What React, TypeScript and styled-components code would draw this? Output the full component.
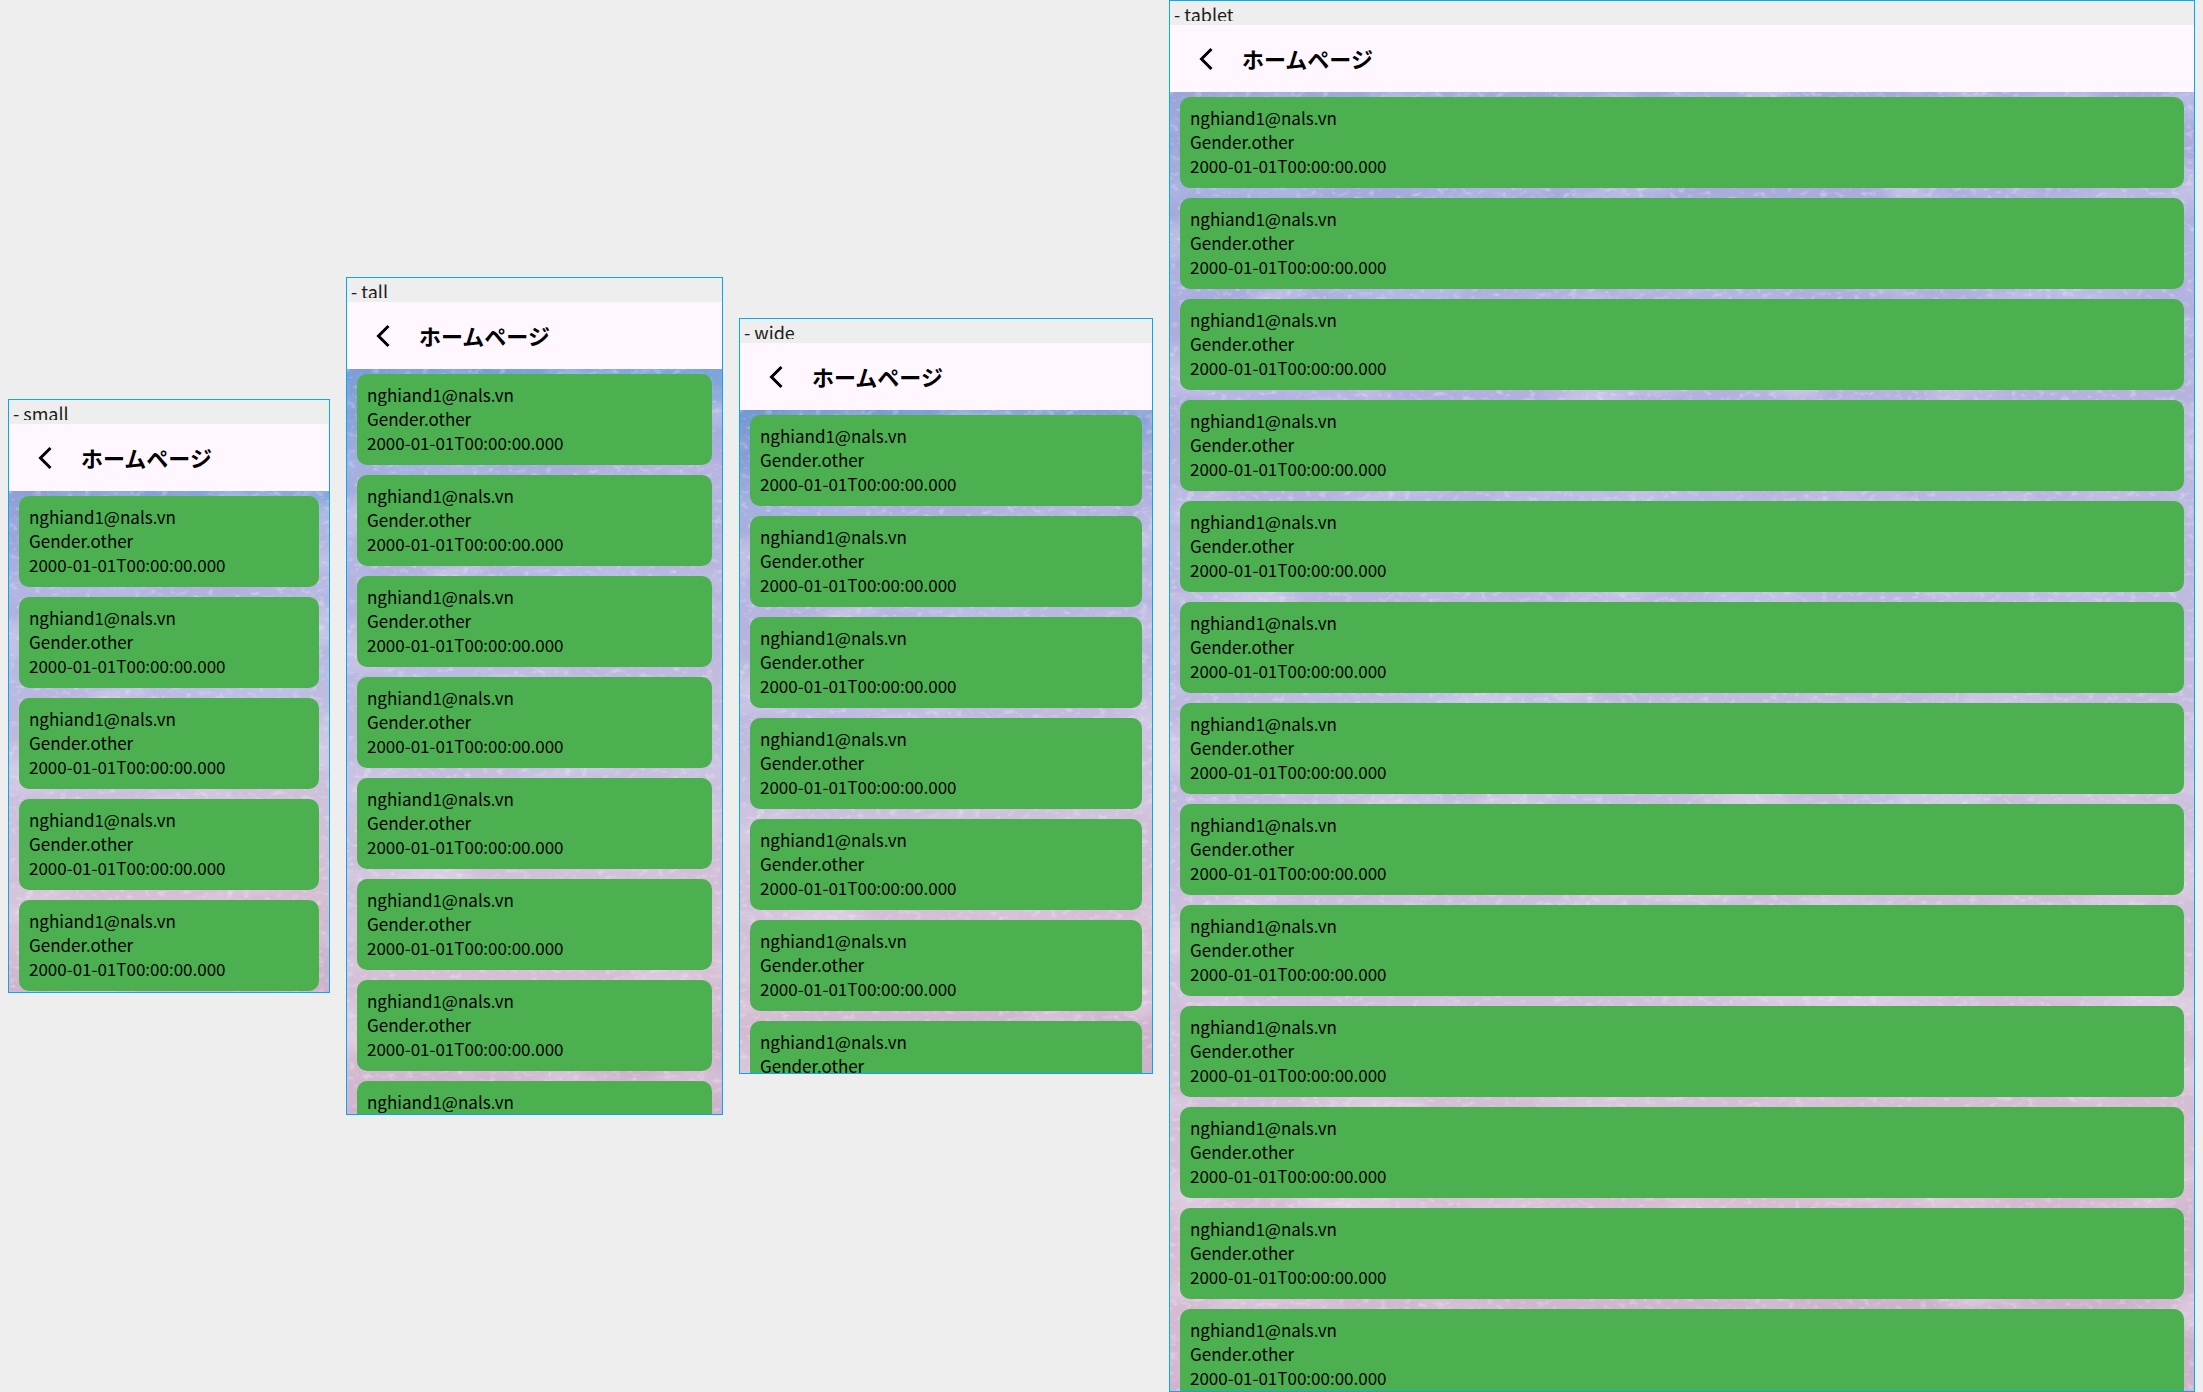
import React from "react";
import styled, { createGlobalStyle } from "styled-components";

const GlobalStyle = createGlobalStyle`
  * { box-sizing: border-box; }
  body {
    margin: 0;
    background: #eeeeee;
    font-family: "Noto Sans CJK JP", "Noto Sans", sans-serif;
  }
`;

const Board = styled.main`
  display: flex;
  align-items: center;
  gap: 16px;
  min-height: 100vh;
  padding: 0 8px;
`;

const Device = styled.section<{ $width: number; $height: number; $grow?: boolean }>`
  display: flex;
  flex-direction: column;
  flex: ${(p) => (p.$grow ? "1 0 0" : `0 0 ${p.$width}px`)};
  min-width: 0;
  height: ${(p) => p.$height}px;
  border: 1px solid #03a9f4;
  overflow: hidden;
`;

const Label = styled.h2`
  flex: none;
  height: 16px;
  margin: 4px;
  overflow: hidden;
  color: #1d1b20;
  font-size: 18px;
  font-weight: 400;
  line-height: 18px;
`;

const AppBar = styled.header`
  display: flex;
  flex: none;
  align-items: center;
  gap: 16px;
  height: 67px;
  padding: 0 16px;
  background: #fef7ff;
`;

const BackButton = styled.button`
  display: flex;
  align-items: center;
  justify-content: center;
  width: 40px;
  height: 40px;
  padding: 0;
  border: 0;
  background: none;
  color: #000;
  cursor: pointer;
`;

const Title = styled.h1`
  margin: 0;
  padding-bottom: 2px;
  color: #000;
  font-size: 22px;
  font-weight: 700;
  line-height: 32px;
`;

const Body = styled.div`
  display: grid;
  flex: 1;
  grid-template: minmax(0, 1fr) / minmax(0, 1fr);
  min-height: 0;
  overflow: hidden;
`;

const Wallpaper = styled.svg`
  grid-area: 1 / 1;
  width: 100%;
  height: 100%;
`;

const List = styled.ul`
  display: flex;
  grid-area: 1 / 1;
  flex-direction: column;
  gap: 10px;
  z-index: 1;
  margin: 0;
  padding: 5px 10px;
  list-style: none;
`;

const Card = styled.li`
  flex: none;
  padding: 9px 10px 10px;
  border-radius: 10px;
  background: #4caf50;
  color: #000;
  font-size: 17px;
  line-height: 24px;
`;

const Line = styled.p`
  margin: 0;
`;

const user = {
  email: "nghiand1@nals.vn",
  gender: "Gender.other",
  birthday: "2000-01-01T00:00:00.000",
};

type Screen = {
  name: string;
  width: number;
  height: number;
  count: number;
  skyLeft: string;
  skyRight: string;
  grow?: boolean;
};

const screens: Screen[] = [
  { name: "small", width: 322, height: 594, count: 5, skyLeft: "#8f9fd6", skyRight: "#5f9cd4" },
  { name: "tall", width: 377, height: 838, count: 8, skyLeft: "#7c9dd5", skyRight: "#4b9cd6" },
  { name: "wide", width: 414, height: 756, count: 7, skyLeft: "#7498d2", skyRight: "#6498d3" },
  { name: "tablet", width: 1026, height: 1392, count: 13, skyLeft: "#9aa6da", skyRight: "#a9abdd", grow: true },
];

function Sky({ id, left, right }: { id: string; left: string; right: string }) {
  return (
    <Wallpaper aria-hidden="true">
      <defs>
        <linearGradient id={`${id}-top`}>
          <stop offset="0" stopColor={left} />
          <stop offset="1" stopColor={right} />
        </linearGradient>
        <linearGradient id={`${id}-sky`} x1="0" y1="0" x2="0.1" y2="1">
          <stop offset="0" stopColor="#a9aadc" stopOpacity="0" />
          <stop offset="0.2" stopColor="#aeaedd" />
          <stop offset="0.45" stopColor="#bbb8df" />
          <stop offset="0.68" stopColor="#cfc1db" />
          <stop offset="0.9" stopColor="#d6bed3" />
          <stop offset="1" stopColor="#cdb2cc" />
        </linearGradient>
        <filter id={`${id}-grain`} x="0" y="0" width="100%" height="100%">
          <feTurbulence type="fractalNoise" baseFrequency="0.12 0.2" numOctaves="3" seed="4" />
          <feColorMatrix values="0 0 0 0 1  0 0 0 0 0.94  0 0 0 0 0.98  3.5 0 0 0 -1.9" />
        </filter>
        <filter id={`${id}-cloud`} x="0" y="0" width="100%" height="100%">
          <feTurbulence type="fractalNoise" baseFrequency="0.006 0.014" numOctaves="4" seed="9" />
          <feColorMatrix values="0 0 0 0 0.52  0 0 0 0 0.6  0 0 0 0 0.86  3 0 0 0 -1.4" />
        </filter>
        <filter id={`${id}-mist`} x="0" y="0" width="100%" height="100%">
          <feTurbulence type="fractalNoise" baseFrequency="0.008 0.016" numOctaves="4" seed="21" />
          <feColorMatrix values="0 0 0 0 0.87  0 0 0 0 0.82  0 0 0 0 0.92  0 3 0 0 -1.4" />
        </filter>
      </defs>
      <rect width="100%" height="100%" fill={`url(#${id}-top)`} />
      <rect width="100%" height="100%" fill={`url(#${id}-sky)`} />
      <rect width="100%" height="60%" filter={`url(#${id}-cloud)`} opacity="0.4" />
      <rect width="100%" height="100%" filter={`url(#${id}-mist)`} opacity="0.4" />
      <rect width="100%" height="100%" filter={`url(#${id}-grain)`} opacity="0.3" />
    </Wallpaper>
  );
}

export default function App() {
  return (
    <>
      <GlobalStyle />
      <Board>
        {screens.map((s) => (
          <Device key={s.name} $width={s.width} $height={s.height} $grow={s.grow}>
            <Label>- {s.name}</Label>
            <AppBar>
              <BackButton type="button" aria-label="戻る">
                <svg width="24" height="24" viewBox="0 0 24 24" fill="none" stroke="currentColor" strokeWidth="3">
                  <path d="M17.5 2L7.5 12l10 10" />
                </svg>
              </BackButton>
              <Title>ホームページ</Title>
            </AppBar>
            <Body>
              <Sky id={s.name} left={s.skyLeft} right={s.skyRight} />
              <List>
                {Array.from({ length: s.count }, (_, i) => (
                  <Card key={i}>
                    <Line>{user.email}</Line>
                    <Line>{user.gender}</Line>
                    <Line>{user.birthday}</Line>
                  </Card>
                ))}
              </List>
            </Body>
          </Device>
        ))}
      </Board>
    </>
  );
}
